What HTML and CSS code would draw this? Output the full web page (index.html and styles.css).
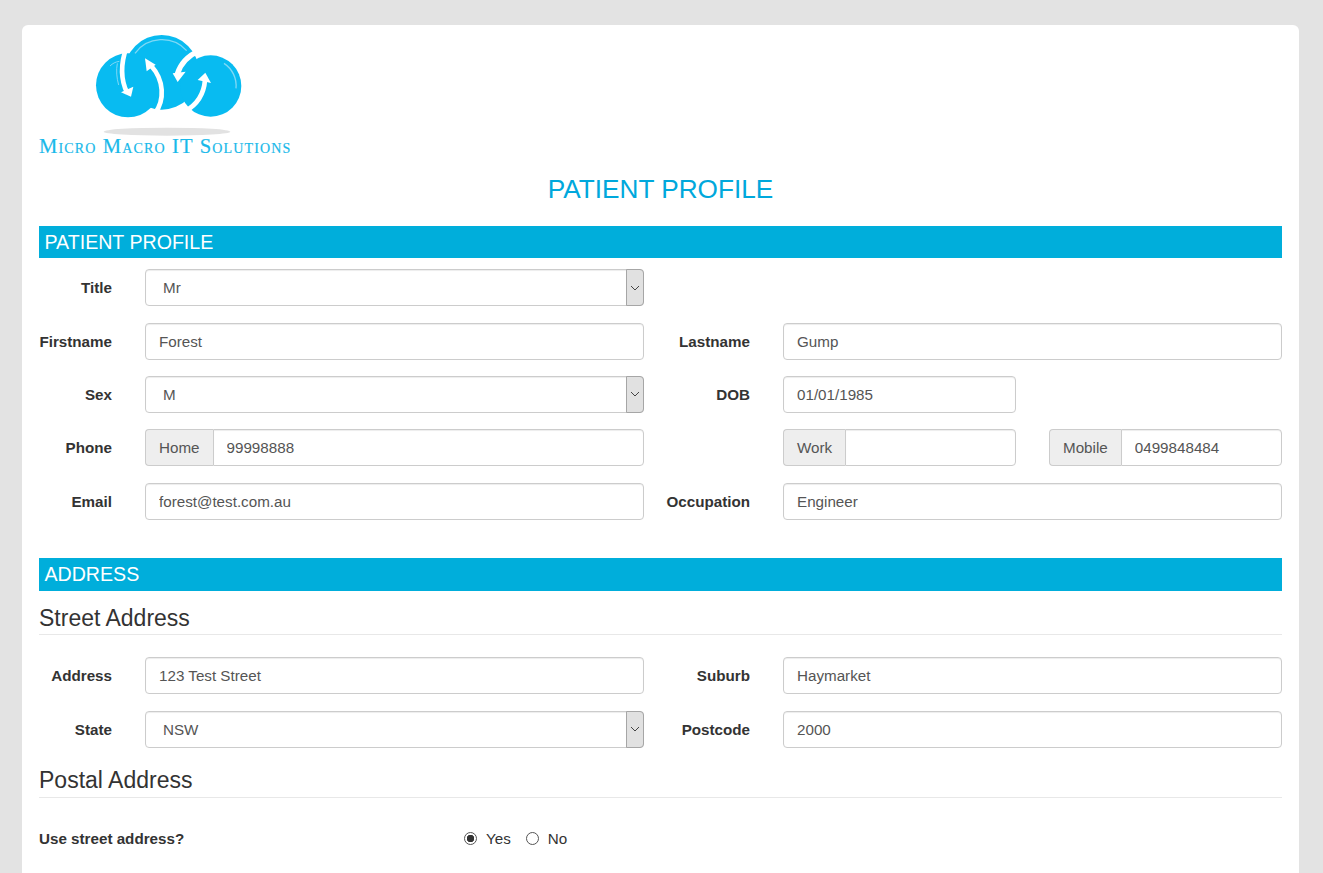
FILE: index.html
```html
<!DOCTYPE html>
<html lang="en">
<head>
<meta charset="utf-8">
<title>Patient Profile</title>
<link rel="stylesheet" href="styles.css">
</head>
<body>
<main class="card">
  <div class="logo">
    <svg width="252" height="124" viewBox="0 0 252 124" role="img" aria-label="Micro Macro IT Solutions">
      <g transform="translate(51 -3) scale(0.3333)">
        <circle cx="215" cy="127" r="112" fill="#08bbf1"/>
        <circle cx="114" cy="166" r="96" fill="#08bbf1"/>
        <circle cx="362" cy="168" r="92" fill="#08bbf1"/>
        <path d="M135 70A100 100 0 0 1 290 62" fill="none" stroke="#7fd8f5" stroke-width="4"/>
        <path d="M402 100A80 80 0 0 1 438 175" fill="none" stroke="#7fd8f5" stroke-width="4"/>
        <path d="M60 108C68 100 76 96 88 94" fill="none" stroke="#7fd8f5" stroke-width="3"/>
        <path d="M82 100C78 120 80 145 86 165" fill="none" stroke="#7fd8f5" stroke-width="3"/>
        <path d="M328 62C292 78 272 100 262 132" fill="none" stroke="#fff" stroke-width="16"/>
        <path d="M110 50C92 100 92 150 112 190" fill="none" stroke="#fff" stroke-width="14"/>
        <path d="M195 250C225 210 222 150 184 108" fill="none" stroke="#fff" stroke-width="14"/>
        <path d="M285 244C325 222 342 190 345 150" fill="none" stroke="#fff" stroke-width="14"/>
        <path d="M93 187L130 170L123 200Z" fill="#fff"/>
        <path d="M165 85L197 104L170 124Z" fill="#fff"/>
        <path d="M248 130L287 125L263 156Z" fill="#fff"/>
        <path d="M346 128L363 159L323 150Z" fill="#fff"/>
        <ellipse cx="231" cy="305" rx="190" ry="12" fill="#e2e2e2"/>
      </g>
      <text class="logo-text" x="0" y="120">Micro Macro IT Solutions</text>
    </svg>
  </div>
  <h1 class="page-title">PATIENT PROFILE</h1>

  <h2 class="band">PATIENT PROFILE</h2>
  <div class="form-grid form-top">
    <label class="lbl">Title</label>
    <div class="select-wrap">
      <select class="ctl"><option>Mr</option></select>
      <span class="select-arrow"><svg width="10" height="6" viewBox="0 0 10 6"><path d="M1 1l4 4 4-4" fill="none" stroke="#444" stroke-width="1"/></svg></span>
    </div>
    <span class="empty"></span><span class="empty"></span>

    <label class="lbl">Firstname</label>
    <input class="ctl" value="Forest">
    <label class="lbl">Lastname</label>
    <input class="ctl" value="Gump">

    <label class="lbl">Sex</label>
    <div class="select-wrap">
      <select class="ctl"><option>M</option></select>
      <span class="select-arrow"><svg width="10" height="6" viewBox="0 0 10 6"><path d="M1 1l4 4 4-4" fill="none" stroke="#444" stroke-width="1"/></svg></span>
    </div>
    <label class="lbl">DOB</label>
    <div class="pair"><input class="ctl" value="01/01/1985"></div>

    <label class="lbl">Phone</label>
    <div class="group"><span class="addon">Home</span><input class="ctl" value="99998888"></div>
    <span class="empty"></span>
    <div class="pair">
      <div class="group"><span class="addon">Work</span><input class="ctl" value=""></div>
      <div class="group"><span class="addon">Mobile</span><input class="ctl" value="0499848484"></div>
    </div>

    <label class="lbl">Email</label>
    <input class="ctl" value="forest@test.com.au">
    <label class="lbl">Occupation</label>
    <input class="ctl" value="Engineer">
  </div>

  <h2 class="band band-address">ADDRESS</h2>
  <h3 class="sub sub-street">Street Address</h3>
  <div class="form-grid">
    <label class="lbl">Address</label>
    <input class="ctl" value="123 Test Street">
    <label class="lbl">Suburb</label>
    <input class="ctl" value="Haymarket">

    <label class="lbl">State</label>
    <div class="select-wrap">
      <select class="ctl"><option>NSW</option></select>
      <span class="select-arrow"><svg width="10" height="6" viewBox="0 0 10 6"><path d="M1 1l4 4 4-4" fill="none" stroke="#444" stroke-width="1"/></svg></span>
    </div>
    <label class="lbl">Postcode</label>
    <input class="ctl" value="2000">
  </div>

  <h3 class="sub sub-postal">Postal Address</h3>
  <div class="radio-row">
    <span class="radio-label">Use street address?</span>
    <label class="radio"><input type="radio" name="same" checked> Yes</label>
    <label class="radio"><input type="radio" name="same"> No</label>
  </div>
</main>
</body>
</html>
```

FILE: styles.css
```css
* { box-sizing: border-box; }
html, body { margin: 0; padding: 0; }
body {
  background: #e3e3e3;
  font-family: "Liberation Sans", Arial, sans-serif;
  font-size: 15.2px;
  color: #333;
  overflow: hidden;
  height: 873px;
}
.card {
  background: #fff;
  margin: 25px 24px 0 22px;
  padding: 8px 17px 13px;
  border-radius: 6px 6px 0 0;
  height: 848px;
}
.logo { height: 124px; }
.logo svg { display: block; }
.logo-text {
  font-family: "Liberation Serif", serif;
  font-variant: small-caps;
  font-size: 20.6px;
  letter-spacing: 1.15px;
  fill: #19b9ea;
  stroke: #19b9ea;
  stroke-width: 0.2px;
}
.page-title {
  margin: 14px 0 19px;
  text-align: center;
  font-size: 26.2px;
  line-height: 36px;
  font-weight: 400;
  color: #00a8dc;
}
.band {
  margin: 0;
  height: 32px;
  padding-left: 5.5px;
  background: #00aedb;
  color: #fff;
  font-size: 19.6px;
  font-weight: 400;
  line-height: 32px;
}
.band-address { height: 33px; line-height: 33px; margin-top: 38px; }
.form-grid {
  display: grid;
  grid-template-columns: 106px 499px 139px 499px;
  grid-auto-rows: 37px;
  row-gap: 16.4px;
  align-items: center;
}
.form-top { margin: 11.2px 0 0.2px; }
.lbl {
  font-weight: 700;
  text-align: right;
  padding-right: 33px;
  white-space: nowrap;
}
.ctl {
  display: block;
  width: 100%;
  height: 37px;
  padding: 0 13px;
  border: 1px solid #ccc;
  border-radius: 4px;
  background: #fff;
  color: #555;
  font: inherit;
  box-shadow: inset 0 1px 1px rgba(0,0,0,.075);
  outline: none;
}
.select-wrap { position: relative; }
select.ctl {
  appearance: none;
  -webkit-appearance: none;
  padding-left: 17px;
}
.select-arrow {
  position: absolute;
  top: 0;
  right: 0;
  bottom: 0;
  width: 18px;
  display: flex;
  align-items: center;
  justify-content: center;
  background: #e1e1e1;
  border: 1px solid #a6a6a6;
  border-radius: 0 4px 4px 0;
}
.pair {
  display: grid;
  grid-template-columns: 233px 233px;
  column-gap: 33px;
}
.group { display: flex; }
.addon {
  flex: none;
  display: flex;
  align-items: center;
  height: 37px;
  padding: 0 13px;
  background: #eee;
  border: 1px solid #ccc;
  border-right: 0;
  border-radius: 4px 0 0 4px;
  color: #555;
}
.group .ctl { flex: 1; min-width: 0; border-radius: 0 4px 4px 0; }
.sub {
  margin: 0;
  font-size: 23px;
  font-weight: 400;
  color: #333;
  border-bottom: 1px solid #e8e8e8;
  line-height: 26px;
}
.sub-street { margin-top: 14px; padding-bottom: 3px; margin-bottom: 22.45px; }
.sub-postal { margin-top: 19.15px; padding-bottom: 4px; margin-bottom: 30px; }
.radio-row {
  display: flex;
  align-items: center;
  height: 22px;
}
.radio-label { width: 425px; font-weight: 700; }
.radio {
  display: flex;
  align-items: center;
  gap: 9px;
  margin-right: 15px;
  color: #333;
}
.radio input {
  appearance: none;
  -webkit-appearance: none;
  margin: 0;
  width: 13px;
  height: 13px;
  border: 1px solid #555;
  border-radius: 50%;
  background: #fff;
}
.radio input:checked {
  background: radial-gradient(circle, #333 0 3.5px, #fff 4px);
}
```
